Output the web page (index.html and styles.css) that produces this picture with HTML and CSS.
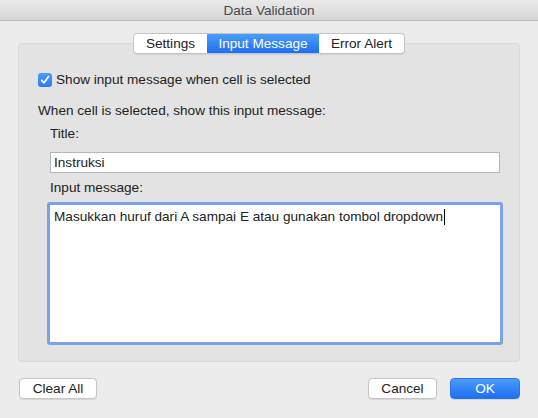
FILE: index.html
```html
<!DOCTYPE html>
<html lang="en">

<head>
    <meta charset="UTF-8">
    <title>Data Validation</title>
    <link rel="stylesheet" href="styles.css">
</head>

<body>
    <div class="window">
        <div class="titlebar">Data Validation</div>

        <div class="tabs">
            <span class="tab tab-settings">Settings</span>
            <span class="tab tab-input active">Input Message</span>
            <span class="tab tab-error">Error Alert</span>
        </div>

        <div class="group">
            <div class="check-row">
                <span class="checkbox">
                    <svg width="14" height="14" viewBox="0 0 14 14">
                        <path d="M3.6 7.3 L6 9.8 L10.6 3.6" fill="none" stroke="#fff" stroke-width="1.7" stroke-linecap="round" stroke-linejoin="round"/>
                    </svg>
                </span>
                <span>Show input message when cell is selected</span>
            </div>
            <p class="lead">When cell is selected, show this input message:</p>
            <p class="field-label">Title:</p>
            <div class="textbox">Instruksi</div>
            <p class="field-label message-label">Input message:</p>
            <div class="message">Masukkan huruf dari A sampai E atau gunakan tombol dropdown<span class="caret"></span></div>
        </div>

        <div class="actions">
            <button class="btn btn-clear">Clear All</button>
            <span class="spacer"></span>
            <button class="btn btn-cancel">Cancel</button>
            <button class="btn btn-ok">OK</button>
        </div>
    </div>
</body>

</html>
```

FILE: styles.css
```css
* {
    box-sizing: border-box;
}

body {
    margin: 0;
    background: #ececec;
    font-family: "Liberation Sans", Arial, sans-serif;
    font-size: 13.6px;
    color: #222;
}

.window {
    width: 538px;
    height: 418px;
    display: flex;
    flex-direction: column;
}

.titlebar {
    height: 21px;
    line-height: 21px;
    text-align: center;
    color: #4a4a4a;
    background: linear-gradient(#e9e9e9, #d6d6d6);
    border-bottom: 1px solid #b8b8b8;
}

.tabs {
    position: relative;
    z-index: 1;
    display: flex;
    align-self: center;
    width: 272px;
    height: 21px;
    margin-top: 12px;
    background: #fff;
    border: 1px solid #c4c4c4;
    border-radius: 4px;
    overflow: hidden;
    box-shadow: 0 0.5px 1px rgba(0, 0, 0, 0.08);
}

.tab {
    line-height: 19px;
    text-align: center;
    color: #222;
}

.tab-settings {
    width: 73px;
}

.tab-input {
    width: 112px;
}

.tab-error {
    width: 85px;
}

.tab.active {
    color: #fff;
    background: linear-gradient(#4c9dfa, #1e6ff0);
}

.group {
    height: 319px;
    margin: -11px 18px 0 18px;
    padding: 29px 0 0 19px;
    background: #e3e3e3;
    border: 1px solid #d8d8d8;
    border-radius: 4px;
}

.check-row {
    display: flex;
    align-items: center;
    gap: 4px;
    height: 14px;
    line-height: 14px;
}

.checkbox {
    width: 14px;
    height: 14px;
    border-radius: 3px;
    background: linear-gradient(#4c9dfa, #2a7cf2);
    display: flex;
}

.lead {
    margin: 16px 0 0 0;
    line-height: 16px;
}

.field-label {
    margin: 7px 0 0 12px;
    line-height: 16px;
}

.textbox {
    width: 450px;
    height: 21px;
    margin: 10px 0 0 12px;
    padding-left: 3px;
    line-height: 19px;
    background: #fff;
    border: 1px solid #b6b6b6;
}

.message-label {
    margin-top: 7px;
}

.message {
    width: 456px;
    height: 143px;
    margin: 6px 0 0 9px;
    padding: 4px 0 0 4px;
    line-height: 16px;
    background: #fff;
    border: 3px solid #79a2ea;
    border-radius: 3px;
}

.caret {
    display: inline-block;
    width: 1px;
    height: 16px;
    margin-left: 1px;
    vertical-align: top;
    background: #000;
}

.actions {
    display: flex;
    gap: 13px;
    margin: 16px 18px 0 19px;
}

.spacer {
    flex: 1;
}

.btn {
    height: 21px;
    padding: 0;
    font-family: inherit;
    font-size: 13.6px;
    color: #222;
    background: #fff;
    border: 1px solid #c6c6c6;
    border-radius: 4px;
    box-shadow: 0 0.5px 1px rgba(0, 0, 0, 0.1);
}

.btn-clear {
    width: 78px;
}

.btn-cancel {
    width: 69px;
}

.btn-ok {
    width: 70px;
    color: #fff;
    border-color: #2a77ec;
    background: linear-gradient(#4c9dfa, #1e6ff0);
}
```
